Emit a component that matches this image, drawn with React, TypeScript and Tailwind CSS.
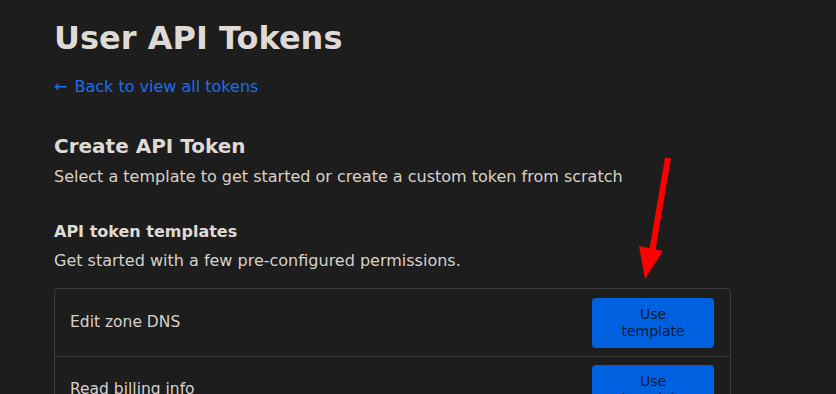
export default function App() {
  const templates = ["Edit zone DNS", "Read billing info"];
  return (
    <div
      className="relative h-[394px] w-[836px] overflow-hidden bg-[#1d1d1d] text-[#ddd9d5]"
      style={{ fontFamily: '"DejaVu Sans", sans-serif' }}
    >
      <main className="flex flex-col pl-[54px] pt-[19px]">
        <h1 className="text-[32px] font-bold leading-[38px] text-[#dedad6]">User API Tokens</h1>
        <a href="#" className="mt-[20px] text-[16px] leading-[20px] text-[#1a6ef0]">
          <span className="mr-[2px]">←</span> Back to view all tokens
        </a>

        <h2 className="mt-[37px] text-[20px] font-bold leading-[24px] text-[#dedad6]">Create API Token</h2>
        <p className="mt-[9px] text-[16px] leading-[20px] text-[#d7d1cb]">
          Select a template to get started or create a custom token from scratch
        </p>

        <h3 className="mt-[35px] text-[16px] font-bold leading-[20px] text-[#dedad6]">API token templates</h3>
        <p className="mt-[9px] text-[16px] leading-[20px] text-[#d7d1cb]">
          Get started with a few pre-configured permissions.
        </p>

        <div className="mt-[17px] w-[677px] rounded-[4px] border border-[#3b3b3b]">
          {templates.map((t, i) => (
            <div
              key={t}
              className={
                "flex h-[67px] items-center justify-between pl-[15px] pr-[16px] " +
                (i > 0 ? "border-t border-[#3b3b3b]" : "")
              }
            >
              <span className="text-[15.5px] text-[#d7d1cb]">{t}</span>
              <button className="h-[50px] w-[122px] rounded-[4px] bg-[#0061e0] text-[14px] leading-[17px] text-[#0b1a33]">
                Use
                <br />
                template
              </button>
            </div>
          ))}
        </div>
      </main>

      {/* red annotation arrow */}
      <svg className="absolute left-0 top-0" width="836" height="394">
        <line x1="668" y1="158" x2="652" y2="252" stroke="#ff0000" strokeWidth="6" />
        <polygon points="639,246 663,251 645,279" fill="#ff0000" />
      </svg>
    </div>
  );
}
